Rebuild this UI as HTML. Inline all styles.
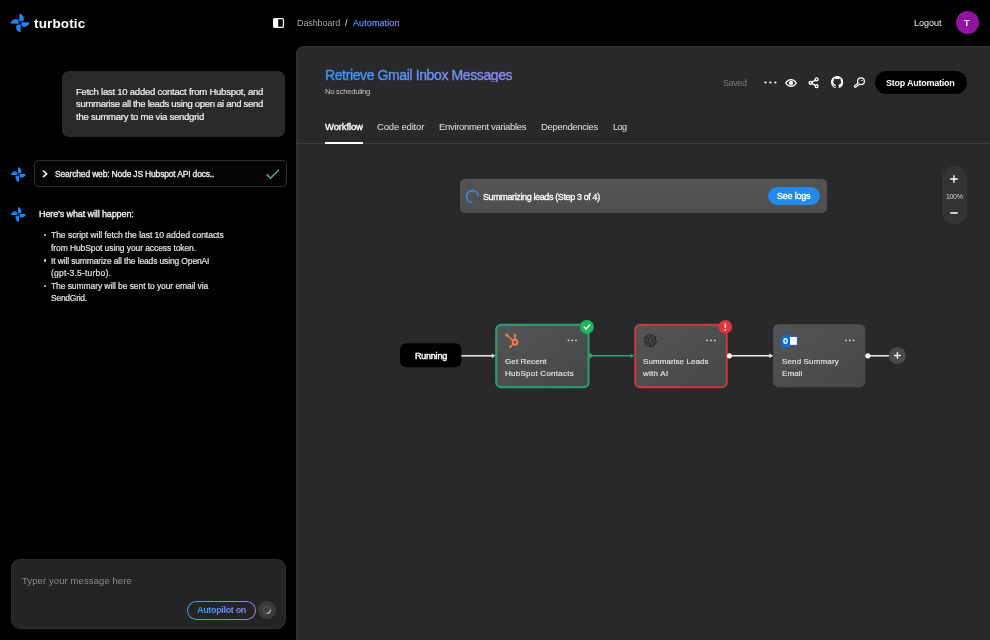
<!DOCTYPE html>
<html lang="en">
<head>
<meta charset="utf-8">
<title>Turbotic – Automation</title>
<style>
*{box-sizing:border-box;margin:0;padding:0}
html,body{width:990px;height:640px;overflow:hidden;background:#000}
body{position:relative;font-family:"Liberation Sans",sans-serif;color:#fff;-webkit-font-smoothing:antialiased}
.t{position:absolute;white-space:nowrap;line-height:1;transform-origin:0 0;will-change:transform}
.abs{position:absolute}
.grad{background:linear-gradient(90deg,#339cfb,#9389f7);-webkit-background-clip:text;background-clip:text;color:transparent}
#panel{position:absolute;left:296.3px;top:45.8px;width:700px;height:600px;background:#29292b;border:1px solid #303031;border-top-left-radius:7px}
#tabline{position:absolute;left:297px;top:143px;width:693px;height:1px;background:#3b3c3e}
#tabul{position:absolute;left:325px;top:141.5px;width:38px;height:2px;background:#fff}
.um{-webkit-text-stroke:.2px #f3f3f3}
.li{-webkit-text-stroke:.2px #e2e2e2}
.nt{-webkit-text-stroke:.15px #e4e4e4}
#title{-webkit-text-stroke:.4px transparent}
#bc3{-webkit-text-stroke:.25px transparent}
</style>
</head>
<body>

<!-- ===== top bar ===== -->
<svg class="abs" style="left:7.9px;top:10.6px" width="24" height="24" viewBox="-12 -12 24 24">
  <defs><linearGradient id="lg" x1="0" y1="0" x2="1" y2="1"><stop offset="0" stop-color="#2a93ff"/><stop offset="1" stop-color="#1672ea"/></linearGradient></defs>
  <g fill="url(#lg)">
    <path d="M-0.7 -1.4 L-0.5 -9.5 C2.6 -8.6 4.3 -6 3.9 -3.2 C3.7 -2.1 2.7 -1.5 1.5 -1.4 Z"/>
    <path d="M-0.7 -1.4 L-0.5 -9.5 C2.6 -8.6 4.3 -6 3.9 -3.2 C3.7 -2.1 2.7 -1.5 1.5 -1.4 Z" transform="rotate(90)"/>
    <path d="M-0.7 -1.4 L-0.5 -9.5 C2.6 -8.6 4.3 -6 3.9 -3.2 C3.7 -2.1 2.7 -1.5 1.5 -1.4 Z" transform="rotate(180)"/>
    <path d="M-0.7 -1.4 L-0.5 -9.5 C2.6 -8.6 4.3 -6 3.9 -3.2 C3.7 -2.1 2.7 -1.5 1.5 -1.4 Z" transform="rotate(270)"/>
  </g>
</svg>
<div class="t" id="brand" style="left:34.3px;top:17.17px;font-size:13.5px;font-weight:700;letter-spacing:0.136px">turbotic</div>

<svg class="abs" style="left:273px;top:18px" width="11" height="10" viewBox="0 0 11 10">
  <rect x="0.6" y="0.6" width="9.8" height="8.8" rx="1" fill="#000" stroke="#fff" stroke-width="1.2"/>
  <rect x="0.6" y="0.6" width="4.6" height="8.8" fill="#fff"/>
</svg>
<div class="t" id="bc1" style="left:296.8px;top:18.68px;font-size:9px;color:#a9a9a9;letter-spacing:-0.104px">Dashboard</div>
<div class="t" id="bc2" style="left:345.3px;top:18.68px;font-size:9px;color:#e6e6e6">/</div>
<div class="t grad" id="bc3" style="left:352.9px;top:18.68px;font-size:9px;letter-spacing:0.097px">Automation</div>

<div class="t" id="logout" style="left:914.2px;top:19.18px;font-size:9px;color:#f2f2f2;letter-spacing:0.013px">Logout</div>
<div class="abs" style="left:955.5px;top:11.2px;width:23.3px;height:23.3px;border-radius:50%;background:#90149f"></div>
<div class="t" id="avt" style="left:964.1px;top:19.00px;font-size:9px;font-weight:700;color:#fbe9ff">T</div>

<!-- ===== main panel ===== -->
<div id="panel"></div>
<div class="t grad" id="title" style="left:325.1px;top:67.7px;font-size:14px;letter-spacing:-0.386px">Retrieve Gmail Inbox Messages</div>
<div class="t" id="nosched" style="left:325.1px;top:87.87px;font-size:7.6px;color:#c4c4c4;letter-spacing:-0.236px">No scheduling</div>

<div class="t" id="tab1" style="left:325px;top:122.36px;font-size:9.5px;color:#fff;-webkit-text-stroke:.35px #fff;letter-spacing:-0.141px">Workflow</div>
<div class="t" id="tab2" style="left:377.1px;top:122.36px;font-size:9.5px;color:#e2e2e2;letter-spacing:-0.182px">Code editor</div>
<div class="t" id="tab3" style="left:438.9px;top:122.36px;font-size:9.5px;color:#e2e2e2;letter-spacing:-0.325px">Environment variables</div>
<div class="t" id="tab4" style="left:540.8px;top:122.36px;font-size:9.5px;color:#e2e2e2;letter-spacing:-0.323px">Dependencies</div>
<div class="t" id="tab5" style="left:612.7px;top:122.61px;font-size:9.2px;color:#e2e2e2;letter-spacing:-0.672px">Log</div>
<div id="tabline"></div>
<div id="tabul"></div>


<!-- header actions -->
<div class="t" id="saved" style="left:723.4px;top:79.18px;font-size:9px;color:#7b7c7e;letter-spacing:-0.406px">Saved</div>
<svg class="abs" style="left:762.3px;top:79px" width="17" height="7" viewBox="0 0 17 7"><g fill="#fff"><circle cx="3.5" cy="3.5" r="1.1"/><circle cx="8.4" cy="3.5" r="1.1"/><circle cx="13.4" cy="3.5" r="1.1"/></g></svg>
<!-- eye -->
<svg class="abs" style="left:784.4px;top:75.5px" width="14" height="14" viewBox="0 0 14 14" fill="none" stroke="#fff" stroke-width="1.3" stroke-linecap="round" stroke-linejoin="round">
  <path d="M1.7 7 C3.1 4.7 4.9 3.7 7 3.7 C9.1 3.7 10.9 4.7 12.3 7 C10.9 9.3 9.1 10.3 7 10.3 C4.9 10.3 3.1 9.3 1.7 7 Z"/>
  <circle cx="7" cy="7" r="1.5" fill="#fff"/>
</svg>
<!-- share -->
<svg class="abs" style="left:807.4px;top:75.6px" width="14" height="14" viewBox="0 0 14 14" fill="none" stroke="#fff" stroke-width="1.3" stroke-linecap="round">
  <circle cx="9.6" cy="3.4" r="1.45"/><circle cx="3.6" cy="6.8" r="1.45"/><circle cx="9.6" cy="10.2" r="1.45"/>
  <path d="M4.9 6.1 L8.3 4.2 M4.9 7.5 L8.3 9.4"/>
</svg>
<!-- github -->
<svg class="abs" style="left:830.8px;top:76.4px" width="12.4" height="12.4" viewBox="0 0 16 16"><path fill="#fff" d="M8 0C3.58 0 0 3.58 0 8c0 3.54 2.29 6.53 5.47 7.59.4.07.55-.17.55-.38 0-.19-.01-.82-.01-1.49-2.01.37-2.53-.49-2.69-.94-.09-.23-.48-.94-.82-1.13-.28-.15-.68-.52-.01-.53.63-.01 1.08.58 1.23.82.72 1.21 1.87.87 2.33.66.07-.52.28-.87.51-1.07-1.78-.2-3.64-.89-3.64-3.95 0-.87.31-1.59.82-2.15-.08-.2-.36-1.02.08-2.12 0 0 .67-.21 2.2.82.64-.18 1.32-.27 2-.27.68 0 1.36.09 2 .27 1.53-1.04 2.2-.82 2.2-.82.44 1.1.16 1.92.08 2.12.51.56.82 1.27.82 2.15 0 3.07-1.87 3.75-3.65 3.95.29.25.54.73.54 1.48 0 1.07-.01 1.93-.01 2.2 0 .21.15.46.55.38A8.013 8.013 0 0016 8c0-4.42-3.58-8-8-8z"/></svg>
<!-- key -->
<svg class="abs" style="left:853.4px;top:75.5px" width="14" height="14" viewBox="0 0 14 14" fill="none" stroke-linecap="round">
  <path d="M6 7.4 L2.3 10.4" stroke="#fff" stroke-width="3"/>
  <circle cx="8" cy="5.3" r="4" fill="#fff"/>
  <path d="M6 7.4 L2.4 10.3" stroke="#29292b" stroke-width="0.7"/>
  <circle cx="8" cy="5.3" r="2.75" fill="#29292b"/>
  <circle cx="8.9" cy="4.4" r="0.7" fill="#fff"/>
</svg>
<div class="abs" style="left:875px;top:71px;width:92px;height:23px;border-radius:12px;background:#000"></div>
<div class="t" id="stop" style="left:886px;top:78.98px;font-size:9px;font-weight:700;color:#fff;letter-spacing:-0.240px">Stop Automation</div>


<!-- ===== sidebar chat ===== -->
<div class="abs" style="left:61.8px;top:71.2px;width:223.6px;height:65.6px;border-radius:7px;background:#2a2a2a"></div>
<div class="t um" id="um1" style="left:75.6px;top:87.06px;font-size:9.5px;color:#f3f3f3;letter-spacing:-0.230px">Fetch last 10 added contact from Hubspot, and</div>
<div class="t um" id="um2" style="left:75.6px;top:99.36px;font-size:9.5px;color:#f3f3f3;letter-spacing:-0.300px">summarise all the leads using open ai and send</div>
<div class="t um" id="um3" style="left:75.6px;top:111.76px;font-size:9.5px;color:#f3f3f3;letter-spacing:-0.240px">the summary to me via sendgrid</div>

<svg class="abs" style="left:8.8px;top:164.5px" width="19" height="19" viewBox="-12 -12 24 24"><g fill="url(#lg)"><path d="M-0.7 -1.4 L-0.5 -9.5 C2.6 -8.6 4.3 -6 3.9 -3.2 C3.7 -2.1 2.7 -1.5 1.5 -1.4 Z"/><path d="M-0.7 -1.4 L-0.5 -9.5 C2.6 -8.6 4.3 -6 3.9 -3.2 C3.7 -2.1 2.7 -1.5 1.5 -1.4 Z" transform="rotate(90)"/><path d="M-0.7 -1.4 L-0.5 -9.5 C2.6 -8.6 4.3 -6 3.9 -3.2 C3.7 -2.1 2.7 -1.5 1.5 -1.4 Z" transform="rotate(180)"/><path d="M-0.7 -1.4 L-0.5 -9.5 C2.6 -8.6 4.3 -6 3.9 -3.2 C3.7 -2.1 2.7 -1.5 1.5 -1.4 Z" transform="rotate(270)"/></g></svg>
<div class="abs" style="left:34.2px;top:160px;width:252.5px;height:27.4px;border-radius:4px;background:#040404;border:1px solid #303030"></div>
<svg class="abs" style="left:41px;top:169px" width="9" height="10" viewBox="0 0 9 10" fill="none" stroke="#fff" stroke-width="1.5" stroke-linecap="round" stroke-linejoin="round"><path d="M2.4 2 L5.8 4.8 L2.4 7.6"/></svg>
<div class="t" id="sw" style="left:54.8px;top:169.50px;font-size:8.5px;color:#f0f0f0;-webkit-text-stroke:.3px #f0f0f0;letter-spacing:-0.178px">Searched web: Node JS Hubspot API docs..</div>
<svg class="abs" style="left:265px;top:168px" width="16" height="12" viewBox="0 0 16 12" fill="none" stroke="#3fb185" stroke-width="1.5" stroke-linecap="round" stroke-linejoin="round"><path d="M2 6.6 L5.6 10.2 L13.6 2"/></svg>

<svg class="abs" style="left:8.8px;top:204.5px" width="19" height="19" viewBox="-12 -12 24 24"><g fill="url(#lg)"><path d="M-0.7 -1.4 L-0.5 -9.5 C2.6 -8.6 4.3 -6 3.9 -3.2 C3.7 -2.1 2.7 -1.5 1.5 -1.4 Z"/><path d="M-0.7 -1.4 L-0.5 -9.5 C2.6 -8.6 4.3 -6 3.9 -3.2 C3.7 -2.1 2.7 -1.5 1.5 -1.4 Z" transform="rotate(90)"/><path d="M-0.7 -1.4 L-0.5 -9.5 C2.6 -8.6 4.3 -6 3.9 -3.2 C3.7 -2.1 2.7 -1.5 1.5 -1.4 Z" transform="rotate(180)"/><path d="M-0.7 -1.4 L-0.5 -9.5 C2.6 -8.6 4.3 -6 3.9 -3.2 C3.7 -2.1 2.7 -1.5 1.5 -1.4 Z" transform="rotate(270)"/></g></svg>
<div class="t" id="hw" style="left:38.8px;top:210.08px;font-size:9px;color:#f0f0f0;-webkit-text-stroke:.35px #f0f0f0;letter-spacing:-0.113px">Here’s what will happen:</div>

<div class="abs" style="left:43.9px;top:234.2px;width:2.2px;height:2.2px;border-radius:50%;background:#ddd"></div>
<div class="abs" style="left:43.9px;top:259.4px;width:2.2px;height:2.2px;border-radius:50%;background:#ddd"></div>
<div class="abs" style="left:43.9px;top:284.5px;width:2.2px;height:2.2px;border-radius:50%;background:#ddd"></div>
<div class="t li" id="li1" style="left:51.1px;top:231.20px;font-size:8.5px;color:#e2e2e2;letter-spacing:-0.025px">The script will fetch the last 10 added contacts</div>
<div class="t li" id="li2" style="left:51.1px;top:243.70px;font-size:8.5px;color:#e2e2e2;letter-spacing:-0.091px">from HubSpot using your access token.</div>
<div class="t li" id="li3" style="left:51.1px;top:257.40px;font-size:8.5px;color:#e2e2e2;letter-spacing:-0.138px">It will summarize all the leads using OpenAI</div>
<div class="t li" id="li4" style="left:51.1px;top:268.80px;font-size:8.5px;color:#e2e2e2;letter-spacing:0.213px">(gpt-3.5-turbo).</div>
<div class="t li" id="li5" style="left:51.1px;top:281.50px;font-size:8.5px;color:#e2e2e2;letter-spacing:-0.081px">The summary will be sent to your email via</div>
<div class="t li" id="li6" style="left:51.1px;top:293.70px;font-size:8.5px;color:#e2e2e2;letter-spacing:-0.260px">SendGrid.</div>

<!-- chat input -->
<div class="abs" style="left:10.9px;top:559.4px;width:274.7px;height:69.2px;border-radius:9px;background:#242424;border:1px solid #2d2d2d"></div>
<div class="t" id="ph" style="left:21.7px;top:575.96px;font-size:9.5px;color:#8b8b8b;letter-spacing:0.094px">Typer your message here</div>
<div class="abs" style="left:186.8px;top:600.5px;width:69.2px;height:19.2px;border-radius:10px;padding:1px;background:linear-gradient(90deg,#3b9cf5,#9a7df0)"><div style="width:100%;height:100%;border-radius:9px;background:#242424"></div></div>
<div class="t grad" id="ap" style="left:196.9px;top:605.58px;font-size:9px;font-weight:700;letter-spacing:-0.335px">Autopilot on</div>
<div class="abs" style="left:258.2px;top:600.6px;width:18px;height:18.8px;border-radius:50%;background:#3b3b3b"></div>
<svg class="abs" style="left:262.2px;top:605px" width="10" height="10" viewBox="0 0 10 10" fill="none"><circle cx="5" cy="5" r="3.4" stroke="#555" stroke-width="1.2"/><path d="M8.4 5 A3.4 3.4 0 0 1 5 8.4" stroke="#b5b5b5" stroke-width="1.2" stroke-linecap="round"/></svg>


<!-- ===== canvas ===== -->
<div class="abs" style="left:460px;top:178.8px;width:367px;height:33.9px;border-radius:5px;background:linear-gradient(180deg,#535454,#4d4e4f)"></div>
<svg class="abs" style="left:465px;top:188.5px" width="15" height="15" viewBox="0 0 15 15" fill="none"><path d="M6.48 13.31 A5.9 5.9 0 1 1 13.31 6.48" stroke="#3a88e4" stroke-width="1.7" stroke-linecap="round"/></svg>
<div class="t" id="sl" style="left:482.5px;top:193.08px;font-size:9px;color:#fff;-webkit-text-stroke:.3px #fff;letter-spacing:-0.379px">Summarizing leads (Step 3 of 4)</div>
<div class="abs" style="left:767.9px;top:187.1px;width:52.2px;height:17.5px;border-radius:9px;background:#2389ef"></div>
<div class="t" id="seelogs" style="left:776.7px;top:192.18px;font-size:9px;color:#fff;-webkit-text-stroke:.35px #fff;letter-spacing:-0.205px">See logs</div>

<div class="abs" style="left:942px;top:165.6px;width:25.2px;height:58.8px;border-radius:12.6px;background:#333436"></div>
<svg class="abs" style="left:950.4px;top:174.8px" width="8" height="8" viewBox="0 0 8 8" stroke="#fff" stroke-width="1.3" stroke-linecap="round"><path d="M4 0.7V7.3M0.7 4H7.3"/></svg>
<div class="t" id="zp" style="left:946px;top:192.82px;font-size:7px;color:#cfcfcf;letter-spacing:-0.336px">100%</div>
<svg class="abs" style="left:950.4px;top:209.1px" width="8" height="8" viewBox="0 0 8 8" stroke="#fff" stroke-width="1.5" stroke-linecap="round"><path d="M0.8 4H7.2"/></svg>

<!-- workflow -->
<svg class="abs" style="left:390px;top:310px" width="540" height="90" viewBox="390 310 540 90">
  <defs>
    <linearGradient id="ng" x1="0" y1="0" x2="1" y2="1"><stop offset="0" stop-color="#525456"/><stop offset="1" stop-color="#454749"/></linearGradient>
  </defs>
  <rect x="400.1" y="343.3" width="61.3" height="24" rx="6" fill="#000"/>
  <!-- edges -->
  <path d="M461.4 355.8H492.5" stroke="#ececec" stroke-width="1.5"/>
  <path d="M495.4 355.8 L491.8 353.7 V357.9Z" fill="#ececec"/>
  <path d="M590 355.8H631" stroke="#2aa26b" stroke-width="1.5"/>
  <path d="M634.4 355.8 L630.6 353.6 V358Z" fill="#2aa26b"/>
  <path d="M729.4 355.8H769.5" stroke="#ececec" stroke-width="1.5"/>
  <path d="M773.2 355.8 L769.2 353.5 V358.1Z" fill="#ececec"/>
  <path d="M868 355.8H890" stroke="#ececec" stroke-width="1.5"/>
  <!-- node 1 -->
  <rect x="496.2" y="324.7" width="92.3" height="62.5" rx="5" fill="url(#ng)" stroke="#2aa26b" stroke-width="2"/>
  <circle cx="590" cy="355.7" r="2.4" fill="#2aa26b"/>
  <circle cx="586.9" cy="326.9" r="7" fill="#1fb45e"/>
  <path d="M584.2 327.1 L586.1 329 L589.7 325.1" fill="none" stroke="#fff" stroke-width="1.4" stroke-linecap="round" stroke-linejoin="round"/>
  <g fill="#d9d9d9"><circle cx="568.5" cy="340.4" r="0.9"/><circle cx="572.3" cy="340.4" r="0.9"/><circle cx="576" cy="340.4" r="0.9"/></g>
  <!-- hubspot -->
  <g stroke="#ff7a59" fill="none" stroke-linecap="round">
    <circle cx="515" cy="342.2" r="2.4" stroke-width="1.9"/>
    <path d="M515 339V335.4" stroke-width="1.4"/>
    <path d="M512.7 340.3 L507.4 335.6" stroke-width="1.3"/>
    <path d="M513 344.2 L510.7 346.4" stroke-width="1.3"/>
  </g>
  <g fill="#ff7a59"><circle cx="515" cy="335" r="1.3"/><circle cx="506.9" cy="335" r="1.5"/><circle cx="510.4" cy="346.8" r="1.2"/></g>
  <!-- node 2 -->
  <rect x="635.2" y="324.7" width="91.6" height="62.5" rx="5" fill="url(#ng)" stroke="#cf3640" stroke-width="1.9"/>
  <circle cx="725.3" cy="326.7" r="6.8" fill="#e2343a"/>
  <path d="M725.3 323.9V327.3" stroke="#fff" stroke-width="1.5" stroke-linecap="round"/><circle cx="725.3" cy="329.8" r="0.85" fill="#fff"/>
  <g fill="#d9d9d9"><circle cx="707" cy="340.4" r="0.9"/><circle cx="710.9" cy="340.4" r="0.9"/><circle cx="714.8" cy="340.4" r="0.9"/></g>
  <circle cx="729.4" cy="355.8" r="2.6" fill="#fff"/>
  <!-- openai -->
  <g transform="translate(643.8 334.2) scale(0.5417)"><path fill="#1b1b1c" d="M22.2819 9.8211a5.9847 5.9847 0 0 0-.5157-4.9108 6.0462 6.0462 0 0 0-6.5098-2.9A6.0651 6.0651 0 0 0 4.9807 4.1818a5.9847 5.9847 0 0 0-3.9977 2.9 6.0462 6.0462 0 0 0 .7427 7.0966 5.98 5.98 0 0 0 .511 4.9107 6.051 6.051 0 0 0 6.5146 2.9001A5.9847 5.9847 0 0 0 13.2599 24a6.0557 6.0557 0 0 0 5.7718-4.2058 5.9894 5.9894 0 0 0 3.9977-2.9001 6.0557 6.0557 0 0 0-.7475-7.0729zm-9.022 12.6081a4.4755 4.4755 0 0 1-2.8764-1.0408l.1419-.0804 4.7783-2.7582a.7948.7948 0 0 0 .3927-.6813v-6.7369l2.02 1.1686a.071.071 0 0 1 .038.052v5.5826a4.504 4.504 0 0 1-4.4945 4.4944zm-9.6607-4.1254a4.4708 4.4708 0 0 1-.5346-3.0137l.142.0852 4.783 2.7582a.7712.7712 0 0 0 .7806 0l5.8428-3.3685v2.3324a.0804.0804 0 0 1-.0332.0615L9.74 19.9502a4.4992 4.4992 0 0 1-6.1408-1.6464zM2.3408 7.8956a4.485 4.485 0 0 1 2.3655-1.9728V11.6a.7664.7664 0 0 0 .3879.6765l5.8144 3.3543-2.0201 1.1685a.0757.0757 0 0 1-.071 0l-4.8303-2.7865A4.504 4.504 0 0 1 2.3408 7.872zm16.5963 3.8558L13.1038 8.364 15.1192 7.2a.0757.0757 0 0 1 .071 0l4.8303 2.7913a4.4944 4.4944 0 0 1-.6765 8.1042v-5.6772a.79.79 0 0 0-.407-.667zm2.0107-3.0231l-.142-.0852-4.7735-2.7818a.7759.7759 0 0 0-.7854 0L9.409 9.2297V6.8974a.0662.0662 0 0 1 .0284-.0615l4.8303-2.7866a4.4992 4.4992 0 0 1 6.6802 4.66zM8.3065 12.863l-2.02-1.1638a.0804.0804 0 0 1-.038-.0567V6.0742a4.4992 4.4992 0 0 1 7.3757-3.4537l-.142.0805L8.704 5.459a.7948.7948 0 0 0-.3927.6813zm1.0976-2.3654l2.602-1.4998 2.6069 1.4998v2.9994l-2.5974 1.4997-2.6067-1.4997Z"/></g>
  <!-- node 3 -->
  <rect x="773.1" y="324.2" width="92.2" height="63" rx="5.5" fill="url(#ng)"/>
  <g fill="#d9d9d9"><circle cx="846" cy="340.4" r="0.9"/><circle cx="849.8" cy="340.4" r="0.9"/><circle cx="853.5" cy="340.4" r="0.9"/></g>
  <circle cx="867.9" cy="355.8" r="2.6" fill="#fff"/>
  <!-- outlook -->
  <rect x="789.6" y="336.6" width="7.6" height="8.6" fill="#fff" stroke="#1d4d7d" stroke-width="0.7"/>
  <path d="M790.6 338.2 L793.2 340.9 L796.6 337.6" fill="none" stroke="#c9d6e6" stroke-width="0.7"/>
  <path d="M781.6 335.9 L789.8 334.6 V347.8 L781.6 346.6Z" fill="#0a72d6"/>
  <ellipse cx="785.5" cy="341" rx="1.6" ry="2.3" fill="none" stroke="#fff" stroke-width="1.3"/>
  <!-- plus -->
  <circle cx="897.4" cy="355.5" r="8.6" fill="#48494b"/>
  <path d="M897.4 352.7V358.3M894.6 355.5H900.2" stroke="#f4f4f4" stroke-width="1.4" stroke-linecap="round"/>
</svg>
<div class="t" id="run" style="left:414.5px;top:352.48px;font-size:9px;color:#fff;-webkit-text-stroke:.4px #fff;letter-spacing:-0.223px">Running</div>
<div class="t nt" id="n1a" style="left:504.8px;top:357.98px;font-size:8px;color:#e4e4e4;letter-spacing:0.114px">Get Recent</div>
<div class="t nt" id="n1b" style="left:504.8px;top:369.83px;font-size:8px;color:#e4e4e4;letter-spacing:0.251px">HubSpot Contacts</div>
<div class="t nt" id="n2a" style="left:643.3px;top:357.98px;font-size:8px;color:#e4e4e4;letter-spacing:0.073px">Summarise Leads</div>
<div class="t nt" id="n2b" style="left:643.3px;top:369.83px;font-size:8px;color:#e4e4e4;letter-spacing:0.270px">with AI</div>
<div class="t nt" id="n3a" style="left:781.5px;top:357.98px;font-size:8px;color:#e4e4e4;letter-spacing:0.142px">Send Summary</div>
<div class="t nt" id="n3b" style="left:781.5px;top:369.83px;font-size:8px;color:#e4e4e4;letter-spacing:0.074px">Email</div>

</body>
</html>
